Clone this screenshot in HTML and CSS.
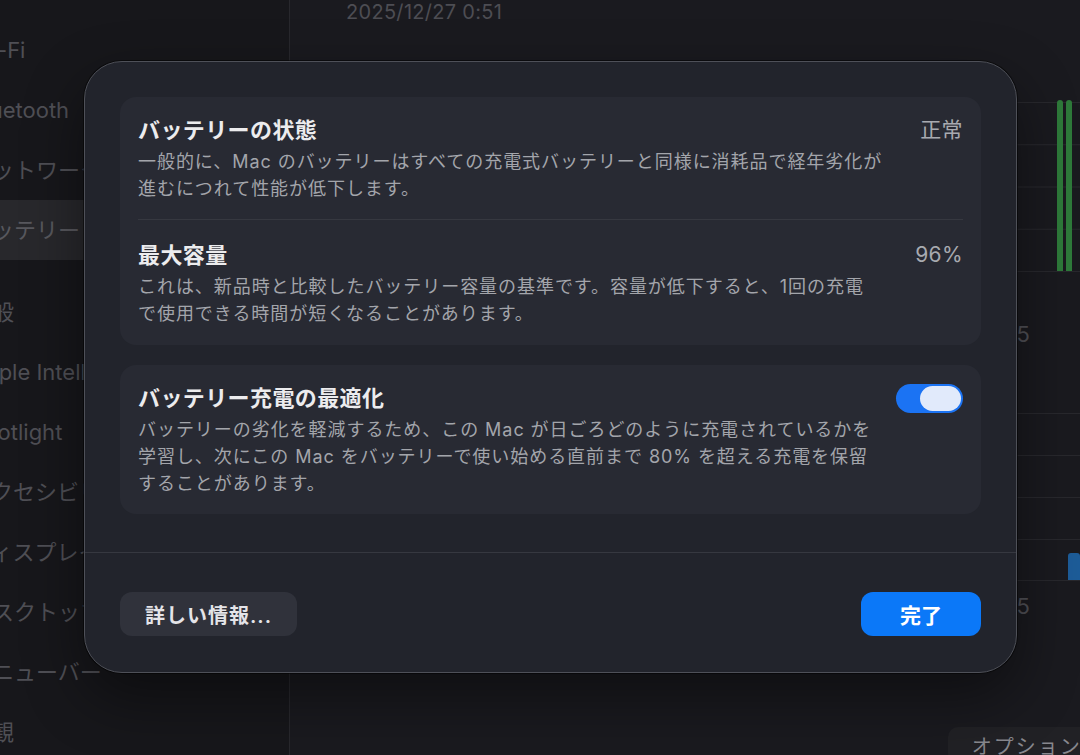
FILE: index.html
```html
<!DOCTYPE html>
<html lang="ja">
<head>
    <meta charset="UTF-8">
    <meta name="viewport" content="width=device-width, initial-scale=1.0">
    <title>バッテリーの状態</title>
    <link rel="stylesheet" href="styles.css">
</head>
<body>
    <div class="window">
        <div class="sidebar">
            <div class="sidebar-list">
                <div class="sidebar-item">Wi-Fi</div>
                <div class="sidebar-item">Bluetooth</div>
                <div class="sidebar-item">ネットワーク</div>
                <div class="sidebar-item active">バッテリー</div>
            </div>
            <div class="sidebar-list group">
                <div class="sidebar-item">一般</div>
                <div class="sidebar-item">Apple Intelligence と Siri</div>
                <div class="sidebar-item">Spotlight</div>
                <div class="sidebar-item">アクセシビリティ</div>
                <div class="sidebar-item">ディスプレイ</div>
                <div class="sidebar-item">デスクトップとDock</div>
                <div class="sidebar-item">メニューバー</div>
                <div class="sidebar-item">外観</div>
            </div>
        </div>

        <div class="main">
            <div class="date">2025/12/27 0:51</div>

            <div class="chart">
                <div class="bar green" style="height: 101%"></div>
                <div class="bar green" style="height: 101%"></div>
            </div>
            <div class="axis-label">15</div>

            <div class="chart chart-usage">
                <div class="bar blue" style="height: 16%"></div>
            </div>
            <div class="axis-label">15</div>

            <div class="main-footer">
                <button class="options-btn">オプション…</button>
            </div>
        </div>
    </div>

    <!-- バッテリーの状態シート -->
    <div class="sheet">
        <div class="sheet-body">
            <div class="group-box">
                <div class="row">
                    <div class="row-text">
                        <div class="row-title">バッテリーの状態</div>
                        <div class="row-desc">一般的に、Mac のバッテリーはすべての充電式バッテリーと同様に消耗品で経年劣化が<br>進むにつれて性能が低下します。</div>
                    </div>
                    <div class="row-value">正常</div>
                </div>
                <div class="row">
                    <div class="row-text">
                        <div class="row-title">最大容量</div>
                        <div class="row-desc">これは、新品時と比較したバッテリー容量の基準です。容量が低下すると、1回の充電<br>で使用できる時間が短くなることがあります。</div>
                    </div>
                    <div class="row-value">96%</div>
                </div>
            </div>

            <div class="group-box">
                <div class="row">
                    <div class="row-text">
                        <div class="row-title">バッテリー充電の最適化</div>
                        <div class="row-desc">バッテリーの劣化を軽減するため、この Mac が日ごろどのように充電されているかを<br>学習し、次にこの Mac をバッテリーで使い始める直前まで 80% を超える充電を保留<br>することがあります。</div>
                    </div>
                    <div class="toggle on"><div class="knob"></div></div>
                </div>
            </div>
        </div>
        <div class="sheet-footer">
            <button class="btn btn-secondary">詳しい情報...</button>
            <button class="btn btn-primary">完了</button>
        </div>
    </div>
</body>
</html>
```

FILE: styles.css
```css
:root {
    --bg-sidebar: #17171b;
    --bg-main: #1a1a1f;
    --line: #28282d;
    --dim-text: #4f4f55;
    --sheet-bg: #22242c;
    --sheet-border: #4e5058;
    --card-bg: #282a33;
    --divider: #363840;
    --title-color: #ececee;
    --desc-color: #a3a5ab;
    --accent: #0b78f8;
}

* {
    box-sizing: border-box;
}

body {
    margin: 0;
    width: 1080px;
    height: 755px;
    overflow: hidden;
    background-color: var(--bg-main);
    font-family: "Inter", "Noto Sans CJK JP", sans-serif;
    color: var(--title-color);
}

.window {
    display: flex;
    height: 755px;
}

/* サイドバー */
.sidebar {
    width: 290px;
    flex-shrink: 0;
    background-color: var(--bg-sidebar);
    border-right: 1px solid var(--line);
    padding-top: 20px;
    overflow: hidden;
}

.sidebar-list {
    margin-left: -30px;
}

.sidebar-list.group {
    margin-top: 22px;
}

.sidebar-item {
    height: 60px;
    line-height: 60px;
    font-size: 22px;
    color: var(--dim-text);
    white-space: nowrap;
}

.sidebar-item.active {
    background-color: #28282c;
    color: #58585e;
}

/* メイン */
.main {
    flex: 1;
    display: flex;
    flex-direction: column;
    padding-left: 56px;
    overflow: hidden;
}

.main > * {
    flex-shrink: 0;
}

.date {
    font-size: 20px;
    line-height: 24px;
    color: #4d4d53;
    letter-spacing: 0.3px;
}

.chart {
    margin-top: 78px;
    height: 170px;
    display: flex;
    align-items: flex-end;
    justify-content: flex-end;
    gap: 3px;
    padding-right: 8px;
    background-image: linear-gradient(to bottom, var(--line) 1px, transparent 1px);
    background-size: 100% 42.25px;
    border-bottom: 1px solid var(--line);
}

.chart-usage {
    margin-top: 66px;
    height: 168px;
    padding-right: 0;
    background-size: 100% 42px;
}

.bar {
    width: 6px;
    border-radius: 3px 3px 0 0;
}

.bar.green {
    background-color: #2e7a3a;
}

.bar.blue {
    width: 12px;
    background-color: #1d5c98;
}

.axis-label {
    margin-top: 49px;
    line-height: 26px;
    font-size: 22px;
    color: #505056;
    text-align: right;
    padding-right: 50px;
}

.chart-usage + .axis-label {
    margin-top: 12px;
}

.main-footer {
    margin-top: 108px;
    display: flex;
    justify-content: flex-end;
    margin-right: -45px;
}

.options-btn {
    height: 36px;
    padding: 0 24px;
    border: none;
    border-radius: 10px;
    background-color: #212125;
    color: #88888e;
    font-family: inherit;
    font-size: 20px;
    letter-spacing: 2px;
}

/* シート */
.sheet {
    position: absolute;
    left: 84px;
    top: 61px;
    width: 933px;
    background-color: var(--sheet-bg);
    border: 1px solid var(--sheet-border);
    border-radius: 38px;
    box-shadow: 0 0 0 1px rgba(0, 0, 0, 0.5), 0 24px 60px rgba(0, 0, 0, 0.45);
}

.sheet-body {
    padding: 35px 35px 38px;
    display: flex;
    flex-direction: column;
    gap: 20px;
}

.group-box {
    background-color: var(--card-bg);
    border-radius: 16px;
    padding: 0 18px;
}

.row {
    display: flex;
    align-items: flex-start;
    gap: 20px;
    padding: 19px 0 17px;
}

.row + .row {
    border-top: 1px solid var(--divider);
    padding-top: 21px;
    padding-bottom: 18px;
}

.row-text {
    flex: 1;
}

.row-title {
    font-size: 22px;
    line-height: 28px;
    font-weight: 600;
    letter-spacing: 0.4px;
    color: var(--title-color);
}

.row-desc {
    margin-top: 4px;
    font-size: 18px;
    line-height: 27px;
    letter-spacing: 0.95px;
    color: var(--desc-color);
    white-space: nowrap;
}

.row-value {
    font-size: 21px;
    line-height: 28px;
    color: #a8aab0;
    letter-spacing: 0.4px;
}

.toggle {
    width: 67px;
    height: 29px;
    padding: 2px;
    border-radius: 15px;
    background-color: #2a2c34;
    display: flex;
}

.toggle.on {
    background-color: #1b73f3;
    justify-content: flex-end;
}

.knob {
    width: 41px;
    height: 25px;
    border-radius: 13px;
    background-color: #e1eafb;
}

.sheet-footer {
    border-top: 1px solid var(--divider);
    padding: 39px 35px 36px;
    display: flex;
    justify-content: space-between;
}

.btn {
    height: 44px;
    padding: 0 23px;
    border: none;
    border-radius: 12px;
    font-family: inherit;
    font-size: 20px;
    font-weight: 600;
    cursor: pointer;
}

.btn-secondary {
    min-width: 177px;
    background-color: #30323b;
    color: #e4e4e8;
    letter-spacing: 1px;
}

.btn-primary {
    min-width: 120px;
    background-color: var(--accent);
    color: #ffffff;
    font-size: 21px;
}
```
